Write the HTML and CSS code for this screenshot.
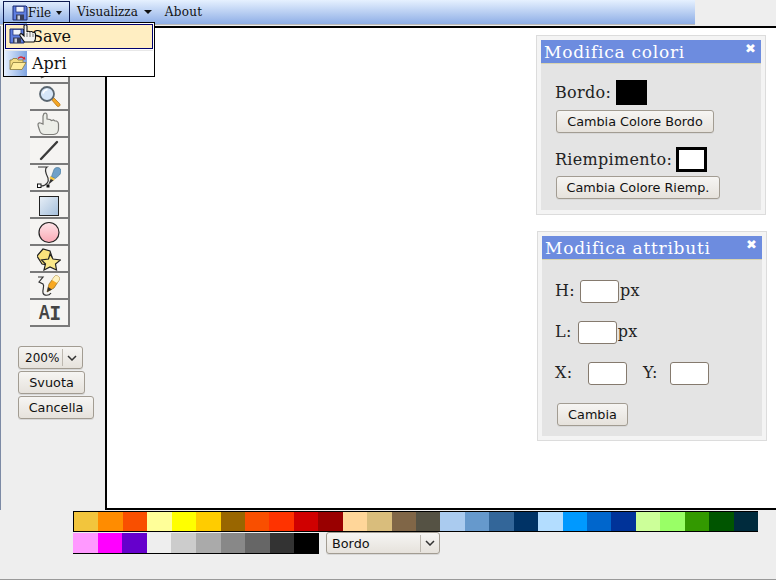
FILE: index.html
```html
<!DOCTYPE html>
<html lang="it">
<head>
<meta charset="utf-8">
<title>Editor</title>
<link rel="stylesheet" href="styles.css">
</head>
<body>
<svg class="defs" width="0" height="0">
  <defs>
    <symbol id="floppy" viewBox="0 0 16 16">
      <path d="M1 1h13l1 1v13H1z" fill="#5f7fe0" stroke="#1a2a70"/>
      <rect x="4" y="1.500" width="8" height="5.500" fill="#eef2fb" stroke="#1a2a70" stroke-width=".7"/>
      <rect x="4" y="9.500" width="8" height="5.500" fill="#3a3f58"/>
      <rect x="5.500" y="10.500" width="2.500" height="4" fill="#c8cfe0"/>
    </symbol>
  </defs>
</svg>
<nav class="menubar">
  <div class="menu-item menu-open">
    <svg class="ico16" viewBox="0 0 16 16"><use href="#floppy"/></svg>
    <span>File</span><span class="caret"></span>
  </div>
  <div class="menu-item menu-vis"><span>Visualizza</span><span class="caret"></span></div>
  <div class="menu-item menu-about"><span>About</span></div>
</nav>

<div class="dropdown">
  <div class="drop-row drop-active">
    <svg class="ico16 drop-ico" viewBox="0 0 16 16"><use href="#floppy"/></svg>
    <span>Save</span>
  </div>
  <div class="drop-row">
    <svg class="ico18 drop-ico-b" viewBox="0 0 18 16">
      <path d="M1 14V5h2l1-1.500h4l1 1.500h5v2" fill="#f4dc84" stroke="#8a7a3a" stroke-width=".8"/>
      <path d="M1 14.500 4 7.500h13l-4 7z" fill="#ffec9c" stroke="#8a7a3a" stroke-width=".8"/>
      <path d="M9 3.500q3-3 6 0" fill="none" stroke="#d8232a" stroke-width="1.200"/>
      <path d="M13.500 4.500h3l-1-3z" fill="#d8232a"/>
    </svg>
    <span>Apri</span>
  </div>
</div>

<svg class="cursor" viewBox="0 0 18 19">
  <path d="M5 2c0-1.600 3-1.600 3 0v6c.5-1 2.500-1 3 0 .5-.8 2.500-.8 3 .5.600-.5 2.500 0 2.500 1.500v4c0 2-1 3-1.500 4H5.500C4 16 2 13.500 1 11.500c-.5-1.500 1-2.500 2-1.500l2 2z" fill="#f4f4f4" stroke="#111" stroke-width="1.100"/>
  <path d="M8 9v4M11 9v4M14 10v3" stroke="#666" stroke-width=".9"/>
</svg>

<div class="workspace">
  <aside class="rail">
    <div class="tools">
      <div class="tool"><svg viewBox="0 0 24 24" class="ico24"><path d="M7 3v16l4-4 3 6 2-1-3-6h5z" fill="#fff" stroke="#333"/></svg></div>
      <div class="tool"><svg viewBox="0 0 24 24" class="ico24"><path d="M18 3l3 3L9 18l-3-3z" fill="#f5b041" stroke="#555"/><path d="M6 15l3 3-5 2z" fill="#f0a030" stroke="#555"/></svg></div>
      <div class="tool"><svg viewBox="0 0 24 24" class="ico24">
        <path d="M14 14l2-2 6.500 6.500c1 1 .5 2 0 2.500s-1.500 1-2.500 0z" fill="#f5a623" stroke="#a86a10" stroke-width=".7"/>
        <circle cx="10" cy="9" r="7" fill="#d6e6f8" stroke="#5a6670" stroke-width="1.800"/>
        <path d="M6 8.500q1-3.500 4.500-4" stroke="#fff" stroke-width="1.500" fill="none"/>
      </svg></div>
      <div class="tool"><svg viewBox="0 0 24 24" class="ico24">
        <path d="M7 1.500c1.500-1 3 0 3 1.500v4l3 .5 1.500 1 2-.5 1.500 1 1.500 0c1 .5 2 1.500 2 3v5c0 3-2 5.500-5 5.500H8c-3 0-5-2-5.500-4.500-.5-2-1.500-3.500-1.500-5.500 0-1.500 1.500-2 2.500-1.500L6 12V4z" fill="#eceee8" stroke="#7c7c78" stroke-width="1.200"/>
      </svg></div>
      <div class="tool"><svg viewBox="0 0 24 24" class="ico24"><path d="M4 20 20 3" stroke="#3a3a3a" stroke-width="2.400" stroke-linecap="round"/></svg></div>
      <div class="tool"><svg viewBox="0 0 24 24" class="ico24">
        <path d="M1 1h9c-3 2-1 7 1 11 1 3-1 8-7 8" fill="none" stroke="#333" stroke-width="1.200"/>
        <rect x="0.500" y="18" width="3.500" height="3.500" fill="#fff" stroke="#111"/>
        <rect x="9.500" y="18.500" width="3" height="3" fill="#111"/>
        <path d="M11 19l3-7 3.500 1.500z" fill="#333"/>
        <path d="M13.500 10l4.500 2-1 2.500-4.500-2z" fill="#f4c542"/>
        <path d="M14.500 10.500l2.500-7c1-2.500 5-2.500 6.500-.5s0 4.500-1 6l-4 3.500z" fill="#6fa0c8" stroke="#41708f" stroke-width=".6"/>
      </svg></div>
      <div class="tool"><svg viewBox="0 0 24 24" class="ico24">
        <defs><linearGradient id="rectg" x1="0" y1="0" x2="1" y2="1"><stop offset="0" stop-color="#e8eff7"/><stop offset="1" stop-color="#a4bfdc"/></linearGradient></defs>
        <rect x="2.500" y="3.500" width="19" height="19" fill="url(#rectg)" stroke="#222"/>
      </svg></div>
      <div class="tool"><svg viewBox="0 0 24 24" class="ico24">
        <defs><linearGradient id="circg" x1="0" y1="0" x2="0" y2="1"><stop offset="0" stop-color="#fde4e8"/><stop offset="1" stop-color="#f9a8b4"/></linearGradient></defs>
        <circle cx="12" cy="12.500" r="10" fill="url(#circg)" stroke="#222" stroke-width="1.200"/>
      </svg></div>
      <div class="tool"><svg viewBox="0 0 24 24" class="ico24">
        <path d="M0 9l6-7 7 2 2 6-4 8-6-1z" fill="#fbe27c" stroke="#222" stroke-width="1.200"/>
        <path d="M13 7l3 5 7.500 1-5 4 1 6-6.500-3-6 3 1.500-6-4-4 7-1z" fill="#fbe98a" stroke="#222" stroke-width="1.200"/>
      </svg></div>
      <div class="tool"><svg viewBox="0 0 24 24" class="ico24">
        <path d="M1 3h5L2 8l4 2c2 2-1 6 0 9 1 3 6 3 8 0" fill="none" stroke="#333" stroke-width="1.200"/>
        <path d="M10 18l2-8 6-8c2-1 5 1 4.500 3.500L17 14z" fill="#f8a820" stroke="#8a6a20" stroke-width=".7"/>
        <path d="M15 6l3-4c2-1 5 1 4.500 3.500L20 9z" fill="#fff3c0"/>
        <path d="M10 18l1-5 4 2.500z" fill="#333"/>
      </svg></div>
      <div class="tool tool-text"><span class="ai-a">A</span><span class="ai-i">I</span></div>
    </div>
    <div class="rail-controls">
      <div class="btn select-zoom"><span>200%</span><span class="sel-sep"></span>
        <svg class="chev" viewBox="0 0 10 6"><path d="M1 1l4 4 4-4" fill="none" stroke="#333" stroke-width="1.500"/></svg></div>
      <button class="btn btn-svuota">Svuota</button>
      <button class="btn btn-cancella">Cancella</button>
    </div>
  </aside>

  <main class="canvas">
    <section class="panel panel-colors">
      <div class="panel-inner">
        <header class="panel-head"><span>Modifica colori</span><span class="close">✖</span></header>
        <div class="panel-body body-colors">
          <div class="row row-color"><span class="lab-b">Bordo:</span><span class="swatch swatch-b"></span></div>
          <button class="btn btn-bordo">Cambia Colore Bordo</button>
          <div class="row row-color row-fill"><span class="lab-f">Riempimento:</span><span class="swatch swatch-f"></span></div>
          <button class="btn btn-riemp">Cambia Colore Riemp.</button>
        </div>
      </div>
    </section>
    <section class="panel panel-attrs">
      <div class="panel-inner">
        <header class="panel-head"><span>Modifica attributi</span><span class="close">✖</span></header>
        <div class="panel-body body-attrs">
          <div class="row row-h"><span>H:</span><input class="field" type="text"><span class="unit">px</span></div>
          <div class="row row-l"><span>L:</span><input class="field" type="text"><span class="unit">px</span></div>
          <div class="row row-xy"><span class="lab-x">X:</span><input class="field" type="text"><span class="lab-y">Y:</span><input class="field" type="text"></div>
          <button class="btn btn-cambia">Cambia</button>
        </div>
      </div>
    </section>
  </main>
</div>

<footer class="palette">
  <div class="pal-row1">
    <i style="background:#f2c53d"></i><i style="background:#ff8c00"></i><i style="background:#f94f00"></i><i style="background:#ffff99"></i><i style="background:#ffff00"></i><i style="background:#ffcc00"></i><i style="background:#996600"></i><i style="background:#f94f00"></i><i style="background:#ff3300"></i><i style="background:#d00000"></i><i style="background:#990000"></i><i style="background:#ffd699"></i><i style="background:#d9bd7c"></i><i style="background:#806647"></i><i style="background:#555244"></i><i style="background:#aacbef"></i><i style="background:#6699cc"></i><i style="background:#336699"></i><i style="background:#003366"></i><i style="background:#b3ddff"></i><i style="background:#0099ff"></i><i style="background:#0066cc"></i><i style="background:#003399"></i><i style="background:#ccff99"></i><i style="background:#99ff66"></i><i style="background:#339900"></i><i style="background:#005500"></i><i style="background:#002b3d"></i>
  </div>
  <div class="pal-line2">
    <div class="pal-row2">
      <i style="background:#ff99ff"></i><i style="background:#ff00ff"></i><i style="background:#6600cc"></i><i style="background:#eeeeee"></i><i style="background:#cccccc"></i><i style="background:#aaaaaa"></i><i style="background:#888888"></i><i style="background:#666666"></i><i style="background:#333333"></i><i style="background:#000000"></i>
    </div>
    <div class="btn select-target"><span class="sel-label">Bordo</span><span class="sel-sep"></span>
      <svg class="chev" viewBox="0 0 10 6"><path d="M1 1l4 4 4-4" fill="none" stroke="#333" stroke-width="1.500"/></svg></div>
  </div>
</footer>
</body>
</html>
```

FILE: styles.css
```css
* { box-sizing: border-box; }
html, body { margin: 0; padding: 0; }
body {
  position: relative;
  width: 776px;
  height: 580px;
  overflow: hidden;
  background: #eeeeee;
  border-bottom: 1px solid #999;
  font-family: "DejaVu Serif", serif;
  font-size: 16px;
  color: #222;
}
.defs { position: absolute; }

/* menu bar */
.menubar {
  display: flex;
  width: 695px;
  height: 25px;
  padding: 1px 0 0 3px;
  background: linear-gradient(#e6f1ff, #8eaee6);
  border-bottom: 1px solid #bbb;
  font-size: 12px;
  color: #111;
}
.menu-item { display: flex; align-items: center; height: 22px; }
.menu-open {
  width: 67px;
  padding-left: 8px;
  border: 1px solid #0d1a50;
  border-bottom: 0;
}
.menu-open .caret { margin-left: 5px; border-width: 4px 3.5px 0; }
.menu-vis { margin-left: 7px; }
.menu-about { margin-left: 13px; letter-spacing: .3px; }
.caret {
  width: 0; height: 0;
  margin-left: 6px;
  border: 4px solid transparent;
  border-top: 4px solid #111;
  border-bottom: 0;
}
.ico16 { width: 16px; height: 16px; display: block; }
.ico18 { width: 18px; height: 16px; display: block; }
.ico24 { width: 24px; height: 24px; display: block; }

/* dropdown */
.dropdown {
  position: absolute;
  left: 3px;
  top: 22px;
  width: 152px;
  height: 55px;
  padding: 1px;
  background: linear-gradient(90deg, #e6f0ff 0, #7ea3e0 23px, #fff 23px);
  border: 1px solid #000;
  font-size: 16px;
  z-index: 5;
  color: #111;
}
.drop-row { display: flex; align-items: center; height: 26px; padding-left: 27px; position: relative; }
.drop-active {
  height: 25px;
  padding-left: 26px;
  background: #ffeec2;
  border: 1px solid #000070;
  box-shadow: 0 1px 0 #fff;
}
.drop-row + .drop-row { margin-top: 1px; border-top: 1px solid #e8e8e8; }
.drop-ico { position: absolute; left: 3px; top: 3px; }
.drop-ico-b { position: absolute; left: 4px; top: 4px; }
.cursor { position: absolute; left: 19px; top: 24px; width: 18px; height: 19px; z-index: 6; }

/* layout */
.workspace { display: flex; height: 484px; margin-top: 1px; }
.rail {
  flex: 0 0 105px;
  padding-top: 4px;
  border-left: 1px solid #7c8aa5;
}
.tools { margin-left: 29px; width: 40px; }
.tool {
  display: flex;
  align-items: center;
  justify-content: center;
  width: 40px;
  height: 27px;
  background: #f5f4f2;
  border-right: 2px solid #7a7a7a;
  border-bottom: 2px solid #7a7a7a;
}
.tool-text { font-family: "Liberation Sans", sans-serif; font-size: 20px; font-weight: 700; color: #444; }
.ai-a { display: inline-block; transform: scaleX(.8); margin-right: -2px; }
.ai-i { font-family: "DejaVu Sans Mono", monospace; font-weight: 700; margin-left: 0; }
.rail-controls {
  display: flex;
  flex-direction: column;
  align-items: flex-start;
  margin: 19px 0 0 17px;
  gap: 2px;
}

/* buttons */
.btn {
  display: flex;
  align-items: center;
  justify-content: center;
  margin: 0;
  padding: 0;
  height: 23px;
  font-family: "DejaVu Sans", sans-serif;
  font-size: 12.8px;
  color: #111;
  background: linear-gradient(#f6f5f3, #e6e2dc);
  border: 1px solid #a29c92;
  border-radius: 3px;
  box-shadow: 0 1px 0 #d8d8d8;
}
.select-zoom { width: 65px; justify-content: flex-start; padding-left: 6px; font-size: 12px; }
.btn-svuota { width: 67px; }
.btn-cancella { width: 76px; }
.sel-sep { width: 1px; height: 17px; background: #bdb8b0; margin-left: 3px; }
.chev { width: 10px; height: 6px; margin-left: 4px; }

/* canvas and panels */
.canvas {
  flex: 1;
  background: #fff;
  border: solid #000;
  border-width: 2px 0 2px 2px;
  display: flex;
  flex-direction: column;
  align-items: flex-start;
}
.panel {
  width: 230px;
  background: #f4f4f4;
  border: 1px solid #dcdcdc;
  padding: 4px;
}
.panel-colors { margin: 7px 0 0 429px; height: 180px; }
.panel-attrs { margin: 16px 0 0 430px; height: 210px; }
.panel-inner { height: 100%; background: #e4e4e4; }
.panel-head {
  display: flex;
  justify-content: space-between;
  height: 24px;
  padding: 0 3px;
  background: #6d8cdf;
  border-bottom: 1px solid #d9d4b0;
  color: #fff;
  font-size: 17px;
  line-height: 24px;
  letter-spacing: .75px;
}
.close { font-family: "DejaVu Sans", sans-serif; font-size: 13px; line-height: 17px; padding-right: 2px; letter-spacing: 0; }
.panel-body { display: flex; flex-direction: column; align-items: flex-start; padding-left: 14px; letter-spacing: .3px; }
.body-colors { padding-top: 16px; }
.body-attrs { padding-top: 20px; padding-left: 13px; }
.row { display: flex; align-items: center; }
.row-color { height: 25px; }
.row-fill { margin-top: 14px; }
.lab-b { width: 61px; }
.lab-f { width: 121px; }
.swatch { display: block; width: 31px; height: 25px; }
.swatch-b { background: #000; }
.swatch-f { background: #fff; border: 3px solid #000; }
.btn-bordo { width: 158px; margin: 5px 0 0 1px; letter-spacing: 0; }
.btn-riemp { width: 164px; margin: 4px 0 0 1px; letter-spacing: 0; }
.field {
  width: 39px;
  height: 23px;
  margin: 0;
  padding: 0;
  background: #fff;
  border: 1px solid #857a6e;
  border-radius: 3px;
}
.body-attrs .row { height: 23px; margin-bottom: 18px; }
.body-attrs .row span { margin-bottom: 2px; }
.row-h .field { margin-left: 5px; }
.row-l .field { margin-left: 6px; }
.unit { margin-left: 1px; }
.lab-x { width: 33px; }
.lab-y { margin-left: 16px; width: 27px; }
.btn-cambia { width: 71px; margin-left: 2px; letter-spacing: 0; }

/* palette */
.palette { margin-left: 73px; }
.pal-row1, .pal-row2 { display: grid; }
.pal-row1 {
  grid-template-columns: repeat(28, 1fr);
  width: 685px;
  height: 21px;
  margin-top: 1px;
  border: 1px solid #000;
  border-right: 0;
}
.pal-row2 {
  grid-template-columns: repeat(10, 1fr);
  width: 246px;
  height: 21px;
  margin-top: 1px;
  border-bottom: 1px solid #000;
}
.pal-row1 i, .pal-row2 i { display: block; }
.pal-line2 { display: flex; align-items: flex-start; }
.select-target { width: 114px; height: 22px; margin-left: 7px; justify-content: flex-start; padding-left: 5px; }
.sel-label { width: 88px; }
.select-target .sel-sep { margin-left: 0; }
.select-target .chev { margin-left: 4px; }
```
